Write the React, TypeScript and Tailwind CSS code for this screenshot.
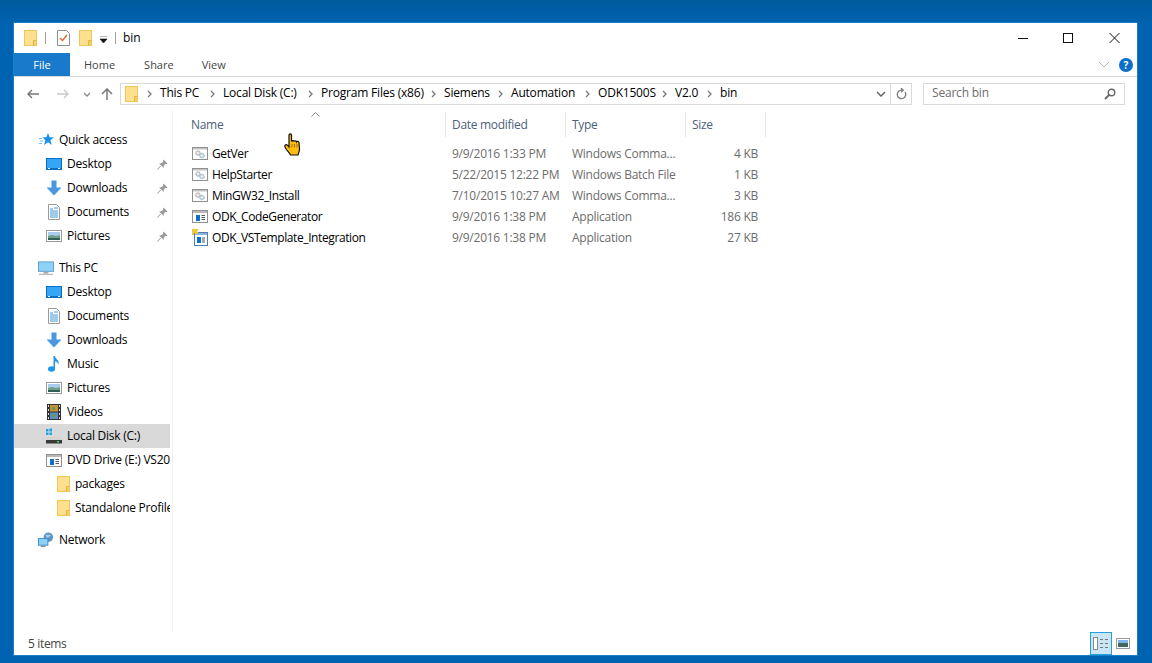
import React from 'react';

const FONT = "font-['Open_Sans','Noto_Sans',sans-serif]";

/* ---------- icons ---------- */
const FolderIcon = ({ className = '' }: { className?: string }) => (
  <svg width="13" height="16" viewBox="0 0 13 16" className={className}>
    <rect x="0.5" y="0.5" width="12" height="15" fill="#ffe08f" stroke="#efc65a" />
    <path d="M9.5 15.5V10.5H12.5" fill="none" stroke="#e6b53c" />
    <rect x="10" y="11" width="2" height="4" fill="#f4cf6c" />
  </svg>
);

const DesktopIcon = () => (
  <svg width="16" height="12" viewBox="0 0 16 12">
    <rect width="16" height="12" fill="#0a6fc4" />
    <rect x="1" y="1" width="14" height="9" fill="#35a6f5" />
    <rect x="1" y="10" width="14" height="1" fill="#0a6fc4" />
    <rect x="2" y="10" width="2" height="1" fill="#dff1ff" />
    <rect x="12" y="10" width="2" height="1" fill="#dff1ff" />
  </svg>
);

const DownloadIcon = () => (
  <svg width="16" height="16" viewBox="0 0 16 16">
    <path d="M5.5 0.5h5v7h5L8 15.5 0.5 7.5h5z" fill="#4a97df" />
  </svg>
);

const DocumentIcon = () => (
  <svg width="12" height="16" viewBox="0 0 12 16">
    <path d="M0.5 0.5h8l3 3v12h-11z" fill="#fff" stroke="#9a9a9a" />
    <path d="M2 5h3M6 4h4M2 7h8M2 9h8M2 11h8M2 13h8" stroke="#3b9ad9" />
  </svg>
);

const PictureIcon = () => (
  <svg width="16" height="12" viewBox="0 0 16 12">
    <rect x="0.5" y="0.5" width="15" height="11" fill="#fff" stroke="#9a9a9a" />
    <rect x="2" y="2" width="12" height="4" fill="#a9cdea" />
    <path d="M2 6l4-1 4 1 4-1v5H2z" fill="#6f9f8a" />
    <path d="M2 8h12v2H2z" fill="#2f5f52" />
  </svg>
);

const MusicIcon = () => (
  <svg width="12" height="16" viewBox="0 0 12 16">
    <ellipse cx="3.5" cy="13" rx="3.5" ry="2.8" fill="#1c97ea" />
    <path d="M5.5 13V0h1.5c0 3 4.5 4 4 9-.4-2-2.5-3.2-4-3.4V13z" fill="#1c97ea" />
  </svg>
);

const VideoIcon = () => (
  <svg width="14" height="16" viewBox="0 0 14 16">
    <rect width="14" height="16" fill="#333" />
    <rect x="3" y="1" width="8" height="6.5" fill="#c9923a" />
    <rect x="3" y="8.5" width="8" height="6.5" fill="#5c8fc4" />
    <path d="M5 3h3v3H5zM5 10h3v3H5z" fill="#6c9a48" />
    <path d="M1 1h1v2H1zM1 5h1v2H1zM1 9h1v2H1zM1 13h1v2H1zM12 1h1v2h-1zM12 5h1v2h-1zM12 9h1v2h-1zM12 13h1v2h-1z" fill="#ddd" />
  </svg>
);

const DiskIcon = () => (
  <svg width="16" height="16" viewBox="0 0 16 16">
    <path d="M0 1h2.500v2.500H0zM3.500 0.500H6v3H3.500zM0 4.500h2.500V7H0zM3.500 4.500H6V7H3.500z" fill="#19a2e8" />
    <path d="M2 9h12l2 3H0z" fill="#d4d4d4" />
    <rect y="12" width="16" height="3.500" fill="#3a3a3a" />
    <rect x="11" y="13" width="2" height="1.500" fill="#3ddc5a" />
  </svg>
);

const AppIcon = () => (
  <svg width="16" height="13" viewBox="0 0 16 13">
    <rect x="0.500" y="0.500" width="15" height="12" fill="#fff" stroke="#8f8f8f" />
    <rect x="1" y="1" width="14" height="2" fill="#b9b9b9" />
    <rect x="4" y="5" width="4" height="6" fill="#0c6fd0" />
    <path d="M9.500 5.500h3.500M9.500 7.500h3.500M9.500 9.500h3.500" stroke="#555" />
  </svg>
);

const TemplateIcon = () => (
  <svg width="16" height="17" viewBox="0 0 16 17">
    <rect x="2.500" y="3.500" width="13" height="13" fill="#fff" stroke="#4b7fb5" />
    <rect x="3" y="4" width="12" height="2" fill="#8fb2d6" />
    <rect x="5" y="8" width="4" height="6" fill="#0c6fd0" />
    <path d="M10 9h3M10 11h3M10 13h3" stroke="#555" />
    <path d="M0 0h6v2H5v1h1v2H3V4H2v2H0z" fill="#f0c83c" />
  </svg>
);

const ScriptIcon = () => (
  <svg width="16" height="13" viewBox="0 0 16 13">
    <rect x="0.500" y="0.500" width="15" height="12" fill="#fff" stroke="#8f8f8f" />
    <rect x="1" y="1" width="14" height="1.500" fill="#c4c4c4" />
    <circle cx="6" cy="6" r="2.300" fill="#d8d8d8" stroke="#a0a0a0" strokeDasharray="1.200 0.600" />
    <circle cx="10" cy="8.500" r="2.300" fill="#cfe0ec" stroke="#8fa5b5" strokeDasharray="1.200 0.600" />
    <circle cx="6" cy="6" r="0.800" fill="#fff" />
    <circle cx="10" cy="8.500" r="0.800" fill="#fff" />
  </svg>
);

const PinIcon = () => (
  <svg width="11" height="11" viewBox="0 0 11 11">
    <path d="M6.500 0.500L10.500 4.500 9.300 5 8 5 6.500 7.500 6.500 9 2 4.500 3.500 4.500 6 3 6 1.700z" fill="#9b9b9b" />
    <path d="M3.500 7L0.500 10.500" stroke="#9b9b9b" />
  </svg>
);

const StarIcon = () => (
  <svg width="15" height="14" viewBox="0 0 15 14">
    <path d="M9 0l1.600 4.300H15l-3.600 2.900 1.400 4.800-3.800-2.800L5 12l1.400-4.800-3-2.900H7.300z" fill="#1c8fe6" />
    <path d="M0 5.500h3M1 8h3M0 10.500h3" stroke="#6fbdf0" />
  </svg>
);

const MonitorIcon = () => (
  <svg width="17" height="15" viewBox="0 0 17 15">
    <rect x="0.500" y="0.500" width="16" height="10" fill="#8ed2f8" stroke="#5a9fc9" />
    <rect x="6" y="11" width="5" height="2" fill="#a9a9a9" />
    <rect x="1" y="13" width="15" height="1.500" fill="#bdbdbd" />
  </svg>
);

const NetworkIcon = () => (
  <svg width="17" height="16" viewBox="0 0 17 16">
    <circle cx="11" cy="5" r="5" fill="#5c95c4" />
    <path d="M8 2c2 1 4 0 6 1-1 2-3 1-3 3-2 0-3-2-3-4z" fill="#a5cbe6" />
    <rect x="0.500" y="6.500" width="10" height="7" fill="#8ed2f8" stroke="#2e8fd0" />
    <rect x="3" y="14" width="5" height="1.500" fill="#8a8a8a" />
  </svg>
);

const TaskIcon = ({ className = '' }: { className?: string }) => (
  <svg width="13" height="16" viewBox="0 0 13 16" className={className}>
    <path d="M0.500 0.500h9l3 3v12h-12z" fill="#fff" stroke="#8f8f8f" />
    <path d="M3 8l2.500 2.500L10 5" fill="none" stroke="#e8622a" strokeWidth="1.300" />
  </svg>
);

const HandCursor = () => (
  <svg width="18" height="24" viewBox="0 0 18 24">
    <path
      d="M5 2c0-1.600 2.500-1.600 2.500 0v6.500c.3-1.300 2.500-1.300 2.700 0 .3-1 2.300-1 2.500.3.400-.8 2.300-.6 2.300.8l.5 6.400c0 2.500-1 4-1.500 6H6.500C5.500 19.500 1 16 .8 13.200c-.1-1.400 1.600-1.900 2.500-1L5 14z"
      fill="#ffbe0f"
      stroke="#111"
      strokeWidth="1.200"
    />
    <path d="M8 11v3.500M10.500 11v3.500M13 11v3.500" stroke="#a06c00" />
  </svg>
);

const Caret = ({ className = '' }: { className?: string }) => (
  <svg width="5" height="8" viewBox="0 0 5 8" className={className}>
    <path d="M1 1l3 3-3 3" fill="none" stroke="#777" strokeWidth="1.300" />
  </svg>
);

/* ---------- data ---------- */
const crumbs = [
  { label: 'This PC', cls: 'w-[63px]' },
  { label: 'Local Disk (C:)', cls: 'w-[98px]' },
  { label: 'Program Files (x86)', cls: 'w-[123px]' },
  { label: 'Siemens', cls: 'w-[67px]' },
  { label: 'Automation', cls: 'w-[87px]' },
  { label: 'ODK1500S', cls: 'w-[77px]' },
  { label: 'V2.0', cls: 'w-[45px]' },
  { label: 'bin', cls: 'w-[30px]' },
];

const files = [
  { name: 'GetVer', date: '9/9/2016 1:33 PM', type: 'Windows Comma...', size: '4 KB', icon: <ScriptIcon /> },
  { name: 'HelpStarter', date: '5/22/2015 12:22 PM', type: 'Windows Batch File', size: '1 KB', icon: <ScriptIcon /> },
  { name: 'MinGW32_Install', date: '7/10/2015 10:27 AM', type: 'Windows Comma...', size: '3 KB', icon: <ScriptIcon /> },
  { name: 'ODK_CodeGenerator', date: '9/9/2016 1:38 PM', type: 'Application', size: '186 KB', icon: <AppIcon /> },
  { name: 'ODK_VSTemplate_Integration', date: '9/9/2016 1:38 PM', type: 'Application', size: '27 KB', icon: <TemplateIcon /> },
];

const NavRow = ({
  icon,
  label,
  pinned,
  level = 1,
  active,
}: {
  icon: React.ReactNode;
  label: string;
  pinned?: boolean;
  level?: 0 | 1 | 2;
  active?: boolean;
}) => (
  <div className={`flex h-6 items-center overflow-hidden whitespace-nowrap ${active ? 'bg-[#d9d9d9]' : ''}`}>
    <span
      className={`flex w-4 shrink-0 items-center justify-center ${
        level === 0 ? 'ml-[24px] mr-[5px]' : level === 1 ? 'ml-[32px] mr-[5px]' : 'ml-[41px] mr-[4px]'
      }`}
    >
      {icon}
    </span>
    <span className="flex-1 overflow-hidden text-[12px] tracking-[-0.25px] text-black">{label}</span>
    {pinned && (
      <span className="mr-[2px] shrink-0">
        <PinIcon />
      </span>
    )}
  </div>
);

const HeaderCell = ({ label, className }: { label: string; className: string }) => (
  <div className={`flex h-[25px] items-center border-r border-[#e5e5e5] pl-[6px] text-[12px] tracking-[-0.3px] text-[#4c607a] ${className}`}>
    {label}
  </div>
);

export default function App() {
  return (
    <div className={`${FONT} h-[663px] w-[1152px] overflow-hidden bg-gradient-to-b from-[#005a9e] to-[#0063b1] to-[4%] pb-[7px] pl-[13px] pr-[14px] pt-[22px]`}>
      <div className="relative flex h-full flex-col border border-[#1a80c8] bg-white">
        {/* title bar */}
        <div className="flex h-[30px] shrink-0 items-center">
          <FolderIcon className="ml-[10px]" />
          <span className="ml-[8px] h-3 w-px bg-[#a0a0a0]" />
          <TaskIcon className="ml-[11px]" />
          <FolderIcon className="ml-[9px]" />
          <svg width="8" height="8" viewBox="0 0 8 8" className="ml-[8px] mt-[3px]">
            <path d="M0 0h7M0 3h7L3.500 7z" fill="#111" stroke="#111" strokeWidth="0.600" />
          </svg>
          <span className="ml-[7px] h-3 w-px bg-[#a0a0a0]" />
          <span className="ml-[7px] text-[12px] text-black">bin</span>
          <div className="ml-auto flex items-center">
            <svg width="46" height="12" viewBox="0 0 46 12">
              <path d="M19 6.500h10" stroke="#111" />
            </svg>
            <svg width="46" height="12" viewBox="0 0 46 12">
              <rect x="18.500" y="1.500" width="9" height="9" fill="none" stroke="#111" />
            </svg>
            <svg width="46" height="12" viewBox="0 0 46 12">
              <path d="M18.500 1l10 10M28.500 1l-10 10" stroke="#111" />
            </svg>
          </div>
        </div>

        {/* ribbon tabs */}
        <div className="flex h-[24px] shrink-0 items-stretch border-b border-[#dadbdc] text-[11px]">
          <div className="flex h-[23px] w-[56px] items-center justify-center bg-[#1979ca] pt-px text-white">File</div>
          <div className="flex flex-1 items-center pt-[2px] text-[#444]">
            <span className="ml-[14px]">Home</span>
            <span className="ml-[29px]">Share</span>
            <span className="ml-[28px]">View</span>
          </div>
          <div className="flex items-center">
            <svg width="12" height="8" viewBox="0 0 12 8">
              <path d="M1 1l5 5 5-5" fill="none" stroke="#b5b5b5" />
            </svg>
            <span className="ml-[9px] mr-[4px] flex h-[14px] w-[14px] items-center justify-center rounded-full bg-[#0b6fc9] text-[10px] font-bold leading-none text-white">
              ?
            </span>
          </div>
        </div>

        {/* address row */}
        <div className="flex h-[34px] shrink-0 items-center">
          <svg width="12" height="10" viewBox="0 0 12 10" className="ml-[13px]">
            <path d="M5 1L1 5l4 4M1 5h11" fill="none" stroke="#7a7a7a" strokeWidth="1.500" />
          </svg>
          <svg width="12" height="10" viewBox="0 0 12 10" className="ml-[18px]">
            <path d="M7 1l4 4-4 4M11 5H0" fill="none" stroke="#c9c9c9" strokeWidth="1.500" />
          </svg>
          <svg width="8" height="5" viewBox="0 0 8 5" className="ml-[14px]">
            <path d="M1 1l3 3 3-3" fill="none" stroke="#8a8a8a" strokeWidth="1.300" />
          </svg>
          <svg width="12" height="12" viewBox="0 0 12 12" className="ml-[10px]">
            <path d="M1 6l5-5 5 5M6 1v11" fill="none" stroke="#7a7a7a" strokeWidth="1.500" />
          </svg>
          <div className="ml-[7px] flex h-[22px] w-[792px] items-center border border-[#d9d9d9]">
            <FolderIcon className="ml-[4px]" />
            <span className="w-[9px]" />
            {crumbs.map((c) => (
              <div key={c.label} className={`flex shrink-0 items-center pb-[2px] text-[12px] tracking-[-0.2px] text-black ${c.cls}`}>
                <Caret className="mr-[8px] mt-[2px] shrink-0" />
                <span className="whitespace-nowrap">{c.label}</span>
              </div>
            ))}
            <div className="ml-auto flex h-full items-center">
              <svg width="10" height="6" viewBox="0 0 10 6" className="mr-[4px]">
                <path d="M1 1l4 4 4-4" fill="none" stroke="#666" strokeWidth="1.500" />
              </svg>
              <div className="flex h-full w-[21px] items-center justify-center border-l border-[#d9d9d9]">
                <svg width="11" height="12" viewBox="0 0 11 12">
                  <path d="M9 4a4.200 4.200 0 1 1-3.500-1.800H7M5 0l2.200 2.200L5 4.400" fill="none" stroke="#7a7a7a" strokeWidth="1.300" />
                </svg>
              </div>
            </div>
          </div>
          <div className="ml-[11px] flex h-[22px] w-[202px] items-center justify-between border border-[#d9d9d9] pl-[8px] pr-[8px] text-[12px] tracking-[-0.2px] text-[#6d6d6d]">
            <span className="pb-[2px]">Search bin</span>
            <svg width="12" height="12" viewBox="0 0 12 12">
              <circle cx="7.500" cy="4.500" r="3.300" fill="none" stroke="#666" strokeWidth="1.400" />
              <path d="M5 7L1 11" stroke="#666" strokeWidth="1.800" />
            </svg>
          </div>
        </div>

        {/* body */}
        <div className="flex min-h-0 flex-1">
          <div className="w-[158px] shrink-0 border-r-2 border-r-white pt-[17px]">
            <NavRow level={0} icon={<StarIcon />} label="Quick access" />
            <NavRow icon={<DesktopIcon />} label="Desktop" pinned />
            <NavRow icon={<DownloadIcon />} label="Downloads" pinned />
            <NavRow icon={<DocumentIcon />} label="Documents" pinned />
            <NavRow icon={<PictureIcon />} label="Pictures" pinned />
            <div className="h-2" />
            <NavRow level={0} icon={<MonitorIcon />} label="This PC" />
            <NavRow icon={<DesktopIcon />} label="Desktop" />
            <NavRow icon={<DocumentIcon />} label="Documents" />
            <NavRow icon={<DownloadIcon />} label="Downloads" />
            <NavRow icon={<MusicIcon />} label="Music" />
            <NavRow icon={<PictureIcon />} label="Pictures" />
            <NavRow icon={<VideoIcon />} label="Videos" />
            <NavRow icon={<DiskIcon />} label="Local Disk (C:)" active />
            <NavRow icon={<AppIcon />} label="DVD Drive (E:) VS2017" />
            <NavRow level={2} icon={<FolderIcon />} label="packages" />
            <NavRow level={2} icon={<FolderIcon />} label="Standalone Profiler" />
            <div className="h-2" />
            <NavRow level={0} icon={<NetworkIcon />} label="Network" />
          </div>
          <div className="w-px shrink-0 bg-[#f0f0f0]" />

          {/* file list */}
          <div className="relative min-w-0 flex-1 pt-px">
            <svg width="9" height="5" viewBox="0 0 9 5" className="absolute left-[138px] top-px">
              <path d="M0.500 4.500l4-4 4 4" fill="none" stroke="#8a8a8a" />
            </svg>
            <div className="flex">
              <HeaderCell label="Name" className="w-[273px] pl-[18px]" />
              <HeaderCell label="Date modified" className="w-[120px]" />
              <HeaderCell label="Type" className="w-[120px]" />
              <HeaderCell label="Size" className="w-[80px]" />
            </div>
            <div className="pt-[6px]">
              {files.map((f) => (
                <div key={f.name} className="flex h-[21px] items-center text-[12px] tracking-[-0.25px] text-[#6d6d6d]">
                  <div className="flex w-[273px] items-center pl-[19px] tracking-[-0.4px] text-black">
                    <span className="flex w-4 justify-center">{f.icon}</span>
                    <span className="ml-[4px]">{f.name}</span>
                  </div>
                  <div className="w-[120px] whitespace-nowrap pl-[6px]">{f.date}</div>
                  <div className="w-[120px] whitespace-nowrap pl-[6px]">{f.type}</div>
                  <div className="w-[72px] text-right">{f.size}</div>
                </div>
              ))}
            </div>
          </div>
        </div>

        {/* status bar */}
        <div className="flex h-[23px] shrink-0 items-center justify-between">
          <span className="ml-[14px] text-[12px] tracking-[-0.35px] text-[#444]">5 items</span>
          <div className="flex h-full items-center">
            <div className="flex h-full w-[22px] flex-col items-center justify-center border border-[#26a0da] bg-[#c9e6f7]">
              <svg width="16" height="13" viewBox="0 0 16 13">
                <rect x="0.500" y="0.500" width="4" height="12" fill="#fff" stroke="#8a8a8a" />
                <path d="M7 2.500h3M12 2.500h3M7 6.500h3M12 6.500h3M7 10.500h3M12 10.500h3" stroke="#777" />
              </svg>
            </div>
            <svg width="14" height="11" viewBox="0 0 14 11" className="ml-[4px] mr-[7px]">
              <rect x="0.500" y="0.500" width="13" height="10" fill="#fff" stroke="#9a9a9a" />
              <rect x="2" y="2" width="10" height="3" fill="#7fb6ea" />
              <rect x="2" y="5" width="10" height="4" fill="#3f6a5c" />
            </svg>
          </div>
        </div>

        {/* mouse pointer in the shot */}
        <div className="absolute left-[270px] top-[110px]">
          <HandCursor />
        </div>
      </div>
    </div>
  );
}
